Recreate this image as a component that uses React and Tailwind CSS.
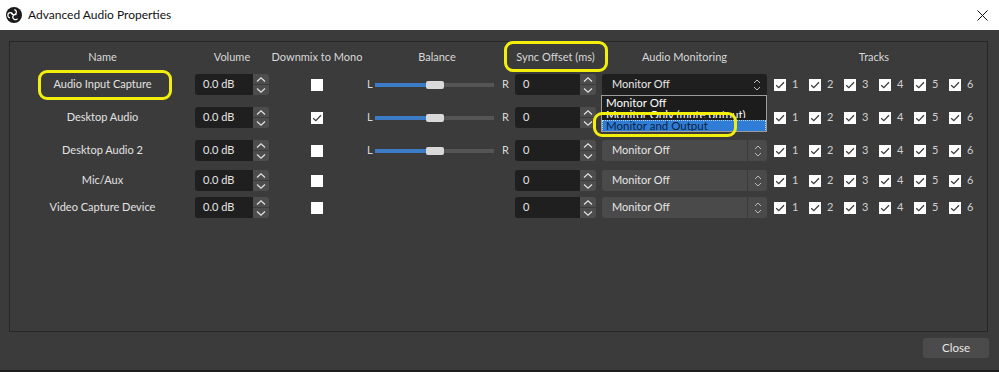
import React from 'react';

const FONT = "font-['Lato',sans-serif]";

const rows = [
  { name: 'Audio Input Capture', mono: false, balance: true, h: 'h-[33px]', open: true },
  { name: 'Desktop Audio', mono: true, balance: true, h: 'h-[33px]' },
  { name: 'Desktop Audio 2', mono: false, balance: true, h: 'h-[33px]' },
  { name: 'Mic/Aux', mono: false, balance: false, h: 'h-[27px]' },
  { name: 'Video Capture Device', mono: false, balance: false, h: 'h-[27px]' },
];

const Check = ({ checked }) => (
  <div className="w-[12px] h-[12px] bg-white flex items-center justify-center shrink-0">
    {checked && (
      <svg width="12" height="12" viewBox="0 0 12 12">
        <path d="M2.2 6.2 L4.8 8.7 L10 3.2" fill="none" stroke="#3c3c3c" strokeWidth="1.3" />
      </svg>
    )}
  </div>
);

const Chevron = ({ up }) => (
  <svg width="12" height="7" viewBox="0 0 12 7">
    <path d={up ? 'M2 5.5 L6 1.8 L10 5.5' : 'M2 1.5 L6 5.2 L10 1.5'} fill="none" stroke="#e2e2e2" strokeWidth="1.2" />
  </svg>
);

// input with the little up/down buttons on its right
const SpinBox = ({ value, w }) => (
  <div className="flex h-[21px]">
    <div className={`${w} h-full bg-[#1f1f1f] rounded-l-[3px] flex items-center pl-[8px] text-[#e6e6e6]`}>{value}</div>
    <div className="w-[16px] h-full flex flex-col gap-[1px]">
      <div className="flex-1 bg-[#4d4d4d] rounded-tr-[3px] flex items-center justify-center"><Chevron up /></div>
      <div className="flex-1 bg-[#4d4d4d] rounded-br-[3px] flex items-center justify-center"><Chevron /></div>
    </div>
  </div>
);

const ComboArrows = () => (
  <svg width="8" height="14" viewBox="0 0 8 14">
    <path d="M1 5 L4 2 L7 5 M1 9 L4 12 L7 9" fill="none" stroke="#bdbdbd" strokeWidth="1" />
  </svg>
);

const Combo = ({ open }) => (
  <div className="relative w-[165px] h-[21px]">
    {open ? (
      <div className="w-full h-full bg-[#1f1f1f] rounded-t-[3px] flex items-center pl-[10px] text-[#e6e6e6]">
        <span className="flex-1">Monitor Off</span>
        <span className="w-[20px] flex justify-center"><ComboArrows /></span>
      </div>
    ) : (
      <div className="w-full h-full bg-[#4a4a4a] rounded-[3px] flex items-center pl-[10px] text-[#e6e6e6]">
        <span className="flex-1">Monitor Off</span>
        <span className="w-[20px] h-full border-l border-[#3a3a3a] flex items-center justify-center"><ComboArrows /></span>
      </div>
    )}
    {open && (
      <div className="absolute left-[-1px] top-[21px] w-[166px] h-[37px] z-10 bg-[#1c1c1c] border border-[#9c9c9c] text-white text-[11.5px] leading-[12px] overflow-hidden">
        <div className="h-[12px] pl-[4px] pt-[1px]">Monitor Off</div>
        <div className="h-[10px] pl-[4px] pt-[1px] overflow-hidden">Monitor Only (mute output)</div>
        <div className="h-[2px]" />
        <div className="h-[12px] pl-[4px] bg-[#2f7dd6] text-[#0d1f3d] outline-dotted outline-1 outline-[#bcd6f5] -outline-offset-1">Monitor and Output</div>
      </div>
    )}
  </div>
);

const Balance = () => (
  <div className="flex items-center text-[#d8d8d8]">
    <span className="w-[10px] pl-[2px]">L</span>
    <div className="relative w-[119px] h-[10px] flex items-center">
      <div className="w-[53px] h-[4px] bg-[#3c7cc6]" />
      <div className="flex-1 h-[4px] bg-[#555555]" />
      <div className="absolute left-[51px] top-[1px] w-[18px] h-[8px] bg-[#d9d9d9] rounded-[2px]" />
    </div>
    <span className="ml-[8px]">R</span>
  </div>
);

const Tracks = () => (
  <div className="flex pl-[4px]">
    {[1, 2, 3, 4, 5, 6].map((n) => (
      <div key={n} className="w-[35px] flex items-center gap-[6px] text-[#d0d0d0]">
        <Check checked />
        <span>{n}</span>
      </div>
    ))}
  </div>
);

const Highlight = ({ className }) => (
  <div className={`absolute border-[3px] border-[#f2ef0c] rounded-[9px] pointer-events-none z-20 ${className}`} />
);

const ObsLogo = () => (
  <svg width="16" height="16" viewBox="0 0 16 16">
    <circle cx="8" cy="8" r="8" fill="#1a1a1a" />
    <path d="M8.3 2.6 A2.6 2.6 0 1 1 5.2 5.6" fill="none" stroke="#fff" strokeWidth="1.2" />
    <path d="M4 10.8 A2.6 2.6 0 1 1 7 7.7" fill="none" stroke="#fff" strokeWidth="1.2" />
    <path d="M11.5 11.6 A2.6 2.6 0 1 1 10.4 7.6" fill="none" stroke="#fff" strokeWidth="1.2" />
  </svg>
);

export default function App() {
  return (
    <div className={`relative w-[999px] h-[372px] overflow-hidden flex flex-col bg-[#3b3b3b] text-[11px] whitespace-nowrap ${FONT}`}>
      {/* title bar */}
      <div className="h-[30px] bg-white flex items-center pl-[6px] pr-[11px] shrink-0">
        <ObsLogo />
        <span className="ml-[6px] text-[#111] text-[12px] flex-1">Advanced Audio Properties</span>
        <svg width="11" height="11" viewBox="0 0 11 11">
          <path d="M0.5 0.5 L10.5 10.5 M10.5 0.5 L0.5 10.5" stroke="#111" strokeWidth="1" />
        </svg>
      </div>

      <div className="flex-1 flex flex-col px-[9px] pt-[11px]">
        <div className="w-[979px] h-[291px] border border-[#262626] pt-[4px] text-[#e2e2e2]">
          {/* header */}
          <div className="flex h-[22px] items-center text-[#d8d8d8]">
            <div className="w-[185px] text-center">Name</div>
            <div className="w-[74px] text-center">Volume</div>
            <div className="w-[96px] text-center">Downmix to Mono</div>
            <div className="w-[144px] text-center">Balance</div>
            <div className="w-[91px] pl-[6px] pr-[4px] text-center">Sync Offset (ms)</div>
            <div className="w-[170px] pl-[2px] pr-[3px] text-center">Audio Monitoring</div>
            <div className="flex-1 pr-[9px] text-center">Tracks</div>
          </div>

          {rows.map((r) => (
            <div key={r.name} className={`flex items-center ${r.h}`}>
              <div className="w-[185px] text-center">{r.name}</div>
              <div className="w-[74px]"><SpinBox value="0.0 dB" w="w-[58px]" /></div>
              <div className="w-[96px] flex justify-center"><Check checked={r.mono} /></div>
              <div className="w-[144px]">{r.balance && <Balance />}</div>
              <div className="w-[91px] pl-[6px]"><SpinBox value="0" w="w-[65px]" /></div>
              <div className="w-[170px] pl-[2px]"><Combo open={r.open} /></div>
              <div className="flex-1"><Tracks /></div>
            </div>
          ))}
        </div>

        <div className="flex justify-end pt-[6px] pr-[1px]">
          <button className="w-[66px] h-[20px] bg-[#4b4b4b] rounded-[3px] text-[#e8e8e8] text-[11.5px]">Close</button>
        </div>
      </div>

      <div className="h-[2px] bg-[#1d1d1d] shrink-0" />

      {/* yellow annotation marks drawn over the dialog */}
      <Highlight className="left-[38px] top-[70px] w-[134px] h-[30px]" />
      <Highlight className="left-[504px] top-[41px] w-[104px] h-[31px]" />
      <Highlight className="left-[593px] top-[112px] w-[144px] h-[25px]" />
    </div>
  );
}
